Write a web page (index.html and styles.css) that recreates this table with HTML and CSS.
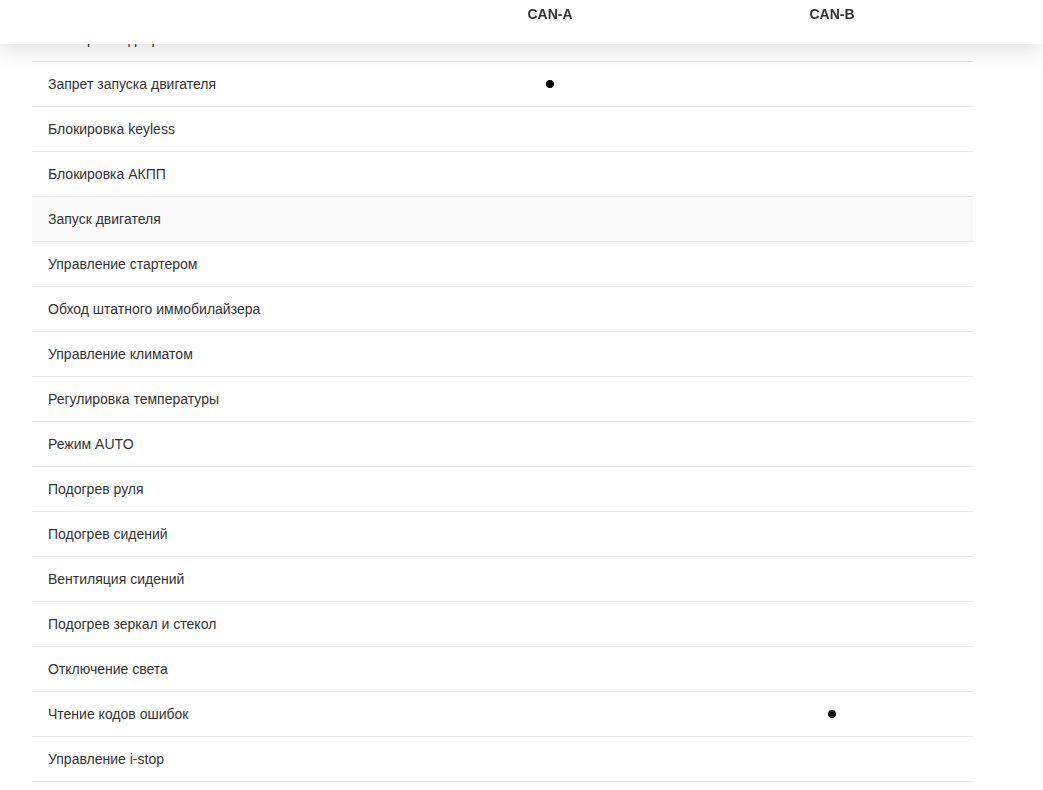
FILE: index.html
```html
<!DOCTYPE html>
<html lang="ru">
<head>
    <meta charset="UTF-8">
    <meta name="viewport" content="width=device-width, initial-scale=1.0">
    <title>Функции CAN</title>
    <link rel="stylesheet" href="styles.css">
</head>
<body>
    <div class="table-head">
        <div class="row-grid">
            <div></div>
            <div class="col-title">CAN-A</div>
            <div class="col-title">CAN-B</div>
        </div>
    </div>

    <div class="features">
        <div class="feature-row row-grid"><div class="name">Блокировка дверей</div><div class="cell"></div><div class="cell"></div></div>
        <div class="feature-row row-grid"><div class="name">Запрет запуска двигателя</div><div class="cell"><span class="dot"></span></div><div class="cell"></div></div>
        <div class="feature-row row-grid"><div class="name">Блокировка keyless</div><div class="cell"></div><div class="cell"></div></div>
        <div class="feature-row row-grid"><div class="name">Блокировка АКПП</div><div class="cell"></div><div class="cell"></div></div>
        <div class="feature-row row-grid active"><div class="name">Запуск двигателя</div><div class="cell"></div><div class="cell"></div></div>
        <div class="feature-row row-grid"><div class="name">Управление стартером</div><div class="cell"></div><div class="cell"></div></div>
        <div class="feature-row row-grid"><div class="name">Обход штатного иммобилайзера</div><div class="cell"></div><div class="cell"></div></div>
        <div class="feature-row row-grid"><div class="name">Управление климатом</div><div class="cell"></div><div class="cell"></div></div>
        <div class="feature-row row-grid"><div class="name">Регулировка температуры</div><div class="cell"></div><div class="cell"></div></div>
        <div class="feature-row row-grid"><div class="name">Режим AUTO</div><div class="cell"></div><div class="cell"></div></div>
        <div class="feature-row row-grid"><div class="name">Подогрев руля</div><div class="cell"></div><div class="cell"></div></div>
        <div class="feature-row row-grid"><div class="name">Подогрев сидений</div><div class="cell"></div><div class="cell"></div></div>
        <div class="feature-row row-grid"><div class="name">Вентиляция сидений</div><div class="cell"></div><div class="cell"></div></div>
        <div class="feature-row row-grid"><div class="name">Подогрев зеркал и стекол</div><div class="cell"></div><div class="cell"></div></div>
        <div class="feature-row row-grid"><div class="name">Отключение света</div><div class="cell"></div><div class="cell"></div></div>
        <div class="feature-row row-grid"><div class="name">Чтение кодов ошибок</div><div class="cell"></div><div class="cell"><span class="dot"></span></div></div>
        <div class="feature-row row-grid"><div class="name">Управление i-stop</div><div class="cell"></div><div class="cell"></div></div>
    </div>
</body>
</html>
```

FILE: styles.css
```css
html, body {
    margin: 0;
    padding: 0;
    background-color: #fff;
}
body {
    font-family: "Liberation Sans", Arial, sans-serif;
    font-size: 14px;
    color: #333;
    overflow: hidden;
}
.row-grid {
    display: grid;
    grid-template-columns: 1fr 282px 282px;
    width: 941px;
}
/* шапка таблицы, закреплена сверху */
.table-head {
    position: fixed;
    top: 0;
    left: 0;
    right: 0;
    z-index: 10;
    height: 44px;
    box-sizing: border-box;
    padding: 6px 0 0 32px;
    background-color: #fff;
    box-shadow: 0 6px 22px rgba(0, 0, 0, 0.12);
}
.col-title {
    text-align: center;
    font-weight: bold;
}
.features {
    padding: 17px 0 0 32px;
}
.feature-row {
    height: 45px;
    box-sizing: border-box;
    border-bottom: 1px solid #ebebeb;
    align-items: center;
}
.feature-row.active {
    background-color: #f9f9f9;
}
.name {
    padding-left: 16px;
}
.cell {
    display: flex;
    justify-content: center;
    align-items: center;
}
.dot {
    display: block;
    width: 8px;
    height: 8px;
    border-radius: 50%;
    background-color: #000;
}
```
